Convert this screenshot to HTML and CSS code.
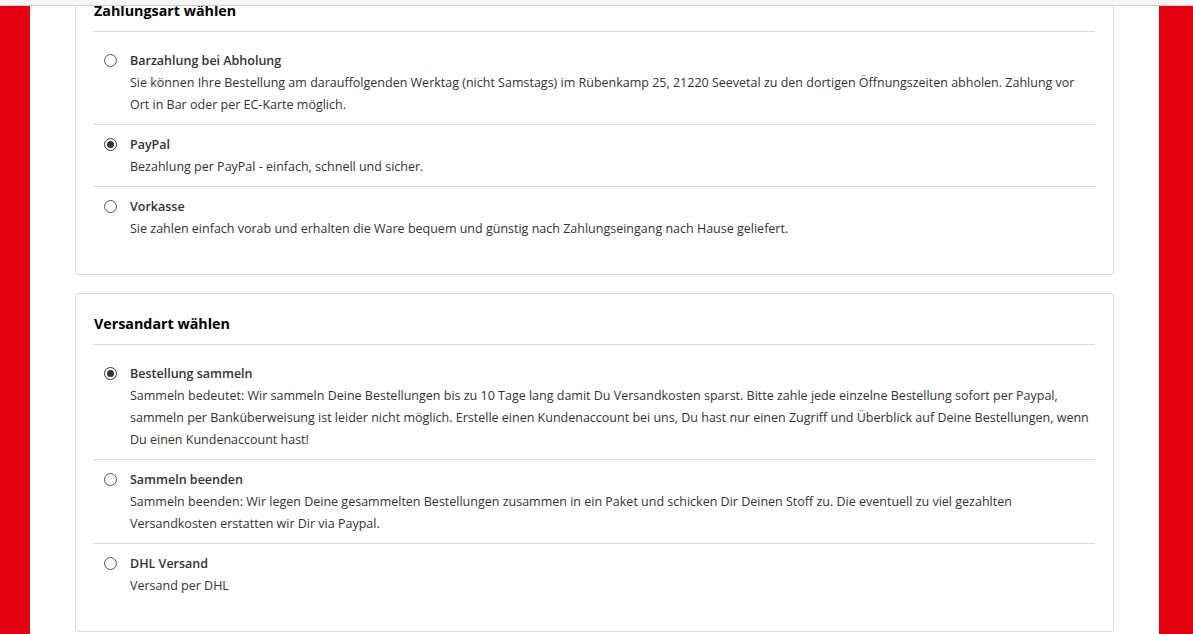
FILE: index.html
```html
<!DOCTYPE html>
<html lang="de">
<head>
<meta charset="utf-8">
<title>Checkout</title>
<link rel="stylesheet" href="styles.css">
</head>
<body>
<div class="topbar"></div>
<div class="viewport">
  <main class="page">
    <section class="card card-first">
      <h2 class="card-title">Zahlungsart wählen</h2>
      <ul class="options">
        <li class="option">
          <span class="radio"></span>
          <div class="option-body">
            <div class="option-title">Barzahlung bei Abholung</div>
            <div class="option-desc">Sie können Ihre Bestellung am darauffolgenden Werktag (nicht Samstags) im Rübenkamp 25, 21220 Seevetal zu den dortigen Öffnungszeiten abholen. Zahlung vor Ort in Bar oder per EC-Karte möglich.</div>
          </div>
        </li>
        <li class="option">
          <span class="radio checked"></span>
          <div class="option-body">
            <div class="option-title">PayPal</div>
            <div class="option-desc">Bezahlung per PayPal - einfach, schnell und sicher.</div>
          </div>
        </li>
        <li class="option">
          <span class="radio"></span>
          <div class="option-body">
            <div class="option-title">Vorkasse</div>
            <div class="option-desc">Sie zahlen einfach vorab und erhalten die Ware bequem und günstig nach Zahlungseingang nach Hause geliefert.</div>
          </div>
        </li>
      </ul>
    </section>
    <section class="card">
      <h2 class="card-title">Versandart wählen</h2>
      <ul class="options">
        <li class="option">
          <span class="radio checked"></span>
          <div class="option-body">
            <div class="option-title">Bestellung sammeln</div>
            <div class="option-desc">Sammeln bedeutet: Wir sammeln Deine Bestellungen bis zu 10 Tage lang damit Du Versandkosten sparst. Bitte zahle jede einzelne Bestellung sofort per Paypal, sammeln per Banküberweisung ist leider nicht möglich. Erstelle einen Kundenaccount bei uns, Du hast nur einen Zugriff und Überblick auf Deine Bestellungen, wenn Du einen Kundenaccount hast!</div>
          </div>
        </li>
        <li class="option">
          <span class="radio"></span>
          <div class="option-body">
            <div class="option-title">Sammeln beenden</div>
            <div class="option-desc">Sammeln beenden: Wir legen Deine gesammelten Bestellungen zusammen in ein Paket und schicken Dir Deinen Stoff zu. Die eventuell zu viel gezahlten Versandkosten erstatten wir Dir via Paypal.</div>
          </div>
        </li>
        <li class="option">
          <span class="radio"></span>
          <div class="option-body">
            <div class="option-title">DHL Versand</div>
            <div class="option-desc">Versand per DHL</div>
          </div>
        </li>
      </ul>
    </section>
  </main>
</div>
</body>
</html>
```
FILE: styles.css
```css
* { box-sizing: border-box; }
html, body { margin: 0; padding: 0; height: 100%; }
body {
  font-family: "Open Sans", "Liberation Sans", sans-serif;
  font-size: 12.5px;
  color: #333;
  background: #e3000f;
  overflow: hidden;
}
.topbar {
  position: relative;
  z-index: 2;
  height: 6px;
  background: #f5f5f5;
  border-bottom: 1px solid #cfcfcf;
}
.viewport {
  height: 628px;
  overflow: hidden;
  margin: 0 34px 0 30px;
  background: #fff;
}
.page {
  padding: 0 45px;
  margin-top: -26px;
}
.card {
  border: 1px solid #dcdcdc;
  border-radius: 3px;
  background: #fff;
  padding: 18px 18px 26px;
  margin-bottom: 18px;
}
.card-title {
  margin: 0;
  font-size: 14.3px;
  font-weight: 700;
  color: #000;
  line-height: 24px;
  padding-bottom: 8px;
  border-bottom: 1px solid #dadada;
}
.options {
  list-style: none;
  margin: 9px 0 0;
  padding: 0;
}
.option {
  display: flex;
  align-items: flex-start;
  padding: 9px 0 8px;
  border-bottom: 1px solid #dadada;
}
.option:last-child { border-bottom: 0; }
.radio {
  flex: 0 0 13px;
  width: 13px;
  height: 13px;
  margin: 4px 13px 0 10px;
  border: 1px solid #555;
  border-radius: 50%;
  position: relative;
  background: #fff;
}
.radio.checked { border-color: #333; }
.radio.checked::after {
  content: "";
  position: absolute;
  left: 2px;
  top: 2px;
  width: 7px;
  height: 7px;
  border-radius: 50%;
  background: #333;
}
.option-body { flex: 1; min-width: 0; }
.option-title {
  font-weight: 600;
  line-height: 22px;
  color: #333;
}
.option-desc {
  line-height: 22px;
}
```
